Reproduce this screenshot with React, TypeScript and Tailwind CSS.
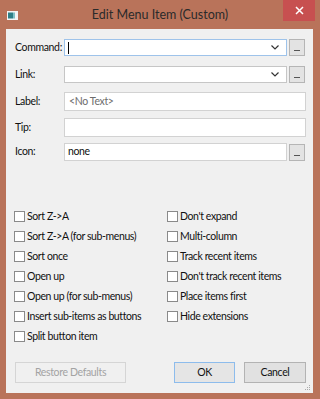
import React from "react";

const font = { fontFamily: 'Lato, "Noto Sans", Arial, sans-serif' };

function Chevron() {
  return (
    <svg width="8" height="5" viewBox="0 0 8 5" className="shrink-0">
      <path d="M0.5 0.5 L4 4 L7.5 0.5" fill="none" stroke="#333" strokeWidth="1.2" />
    </svg>
  );
}

function Ellipsis() {
  return (
    <button className="ml-[2px] flex h-[17px] w-[16px] items-end justify-center border border-[#b5b5b5] bg-[#e3e3e3] pb-[4px]">
      <span className="block h-px w-[6px] bg-[#555]" />
    </button>
  );
}

function Check({ label }: { label: string }) {
  return (
    <div className="flex h-[20px] items-center whitespace-nowrap">
      <span className="h-[11px] w-[11px] shrink-0 border border-[#8a8a8a] bg-white" />
      <span className="ml-[2px] text-[10.5px] leading-none tracking-[-0.4px] text-[#111]">{label}</span>
    </div>
  );
}

export default function App() {
  const left = [
    "Sort Z->A",
    "Sort Z->A (for sub-menus)",
    "Sort once",
    "Open up",
    "Open up (for sub-menus)",
    "Insert sub-items as buttons",
    "Split button item",
  ];
  const right = [
    "Don't expand",
    "Multi-column",
    "Track recent items",
    "Don't track recent items",
    "Place items first",
    "Hide extensions",
  ];

  return (
    <div className="flex h-[399px] w-[320px] flex-col bg-[#b9735a]" style={font}>
      {/* title bar */}
      <div className="relative flex h-[29px] shrink-0 items-start">
        <svg width="11" height="9" viewBox="0 0 11 9" className="ml-[7px] mt-[11px]">
          <rect x="0" y="0" width="11" height="9" fill="#f4f4f4" />
          <rect x="1" y="1.5" width="5" height="6" fill="#2f7f86" />
          <rect x="6" y="1.5" width="2" height="6" fill="#7fc0c4" />
        </svg>
        <div className="absolute left-0 right-0 top-[7px] text-center text-[12.5px] leading-[16px] text-[#2a2a2a]">
          Edit Menu Item (Custom)
        </div>
        <div className="absolute right-[5px] top-0 flex h-[21px] w-[32px] items-center justify-center bg-[#c75050]">
          <svg width="9" height="9" viewBox="0 0 9 9">
            <path d="M1 1 L8 8 M8 1 L1 8" stroke="#fff" strokeWidth="1.5" />
          </svg>
        </div>
      </div>

      {/* client area */}
      <div className="ml-[6px] flex h-[364px] w-[307px] flex-col bg-[#f0f0f0] text-[10.5px] tracking-[-0.35px] text-[#111]">
        <div className="mt-[10px] flex items-center whitespace-nowrap">
          <span className="w-[58px] pl-[9px]">Command:</span>
          <div className="flex h-[17px] w-[223px] items-center border border-[#9ec3ea] bg-white pl-[3px] pr-[7px]">
            <span className="h-[12px] w-px bg-black" />
            <span className="flex-1" />
            <Chevron />
          </div>
          <Ellipsis />
        </div>

        <div className="mt-[10px] flex items-center">
          <span className="w-[58px] pl-[9px]">Link:</span>
          <div className="flex h-[17px] w-[223px] items-center justify-end border border-[#c6c6c6] bg-white pr-[7px]">
            <Chevron />
          </div>
          <Ellipsis />
        </div>

        <div className="mt-[9px] flex items-center">
          <span className="w-[58px] pl-[9px]">Label:</span>
          <div className="flex h-[19px] w-[242px] items-center border border-[#d2d2d2] bg-white pl-[4px] text-[#6d6d6d]">
            &lt;No Text&gt;
          </div>
        </div>

        <div className="mt-[7px] flex items-center">
          <span className="w-[58px] pl-[9px]">Tip:</span>
          <div className="h-[19px] w-[242px] border border-[#d2d2d2] bg-white" />
        </div>

        <div className="mt-[6px] flex items-center">
          <span className="w-[58px] pl-[9px]">Icon:</span>
          <div className="flex h-[18px] w-[223px] items-center border border-[#d2d2d2] bg-white pl-[3px]">
            none
          </div>
          <Ellipsis />
        </div>

        <div className="mt-[45px] flex pl-[8px]">
          <div className="flex w-[153px] flex-col">
            {left.map((l) => (
              <Check key={l} label={l} />
            ))}
          </div>
          <div className="flex flex-col">
            {right.map((l) => (
              <Check key={l} label={l} />
            ))}
          </div>
        </div>

        <div className="mt-[16px] flex items-center pl-[9px]">
          <div className="flex h-[21px] w-[111px] items-center justify-center border border-[#d5d5d5] bg-[#f0f0f0] text-[#a3a3a3]">
            Restore Defaults
          </div>
          <div className="ml-[48px] flex h-[21px] w-[61px] items-center justify-center border border-[#8dbcec] bg-[#e5e5e5]">
            OK
          </div>
          <div className="ml-[9px] flex h-[21px] w-[62px] items-center justify-center border border-[#b3b3b3] bg-[#e1e1e1]">
            Cancel
          </div>
        </div>

        <div className="relative flex-1">
          <svg width="6" height="6" viewBox="0 0 6 6" className="absolute bottom-[2px] right-[2px]">
            <rect x="4" y="0" width="1" height="1" fill="#aaa" />
            <rect x="2" y="2" width="1" height="1" fill="#aaa" />
            <rect x="4" y="2" width="1" height="1" fill="#aaa" />
            <rect x="0" y="4" width="1" height="1" fill="#aaa" />
            <rect x="2" y="4" width="1" height="1" fill="#aaa" />
            <rect x="4" y="4" width="1" height="1" fill="#aaa" />
          </svg>
        </div>
      </div>
    </div>
  );
}
